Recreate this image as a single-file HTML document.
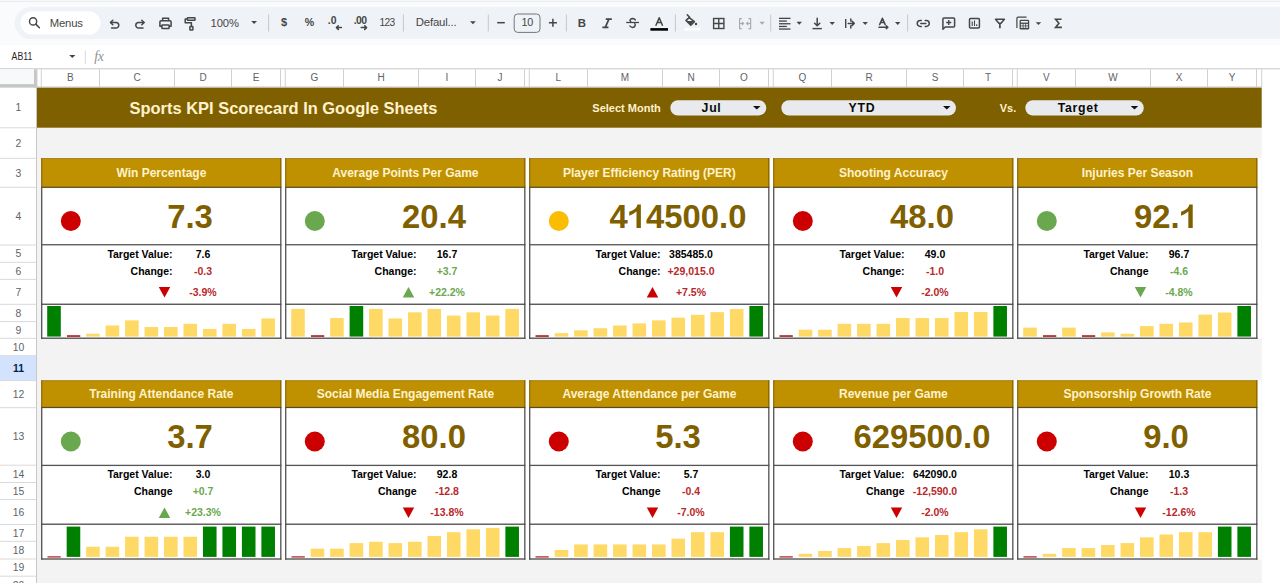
<!DOCTYPE html>
<html><head><meta charset="utf-8"><title>Sports KPI Scorecard</title>
<style>
html,body{margin:0;padding:0;width:1280px;height:583px;overflow:hidden;background:#fff;font-family:"Liberation Sans", sans-serif;}
</style></head><body>
<svg width="1280" height="583" viewBox="0 0 1280 583" style="position:absolute;left:0;top:0;font-family:&quot;Liberation Sans&quot;, sans-serif">
<rect x="0.00" y="0.00" width="1280.00" height="68.30" fill="#f9fbfd" />
<rect x="0.00" y="0.80" width="1280.00" height="1.00" fill="#e6e8eb" />
<rect x="14.6" y="7" width="1300" height="32.1" rx="16" fill="#eff2f7"/>
<rect x="20.5" y="11.5" width="80" height="23" rx="11.5" fill="#ffffff"/>
<rect x="0.00" y="45.00" width="1280.00" height="23.30" fill="#ffffff" />
<circle cx="33.1" cy="21.4" r="3.6" fill="none" stroke="#444746" stroke-width="1.4"/>
<path d="M35.8 24.1 L39.4 27.7" stroke="#444746" stroke-width="1.5" stroke-linecap="round"/>
<text x="49.7" y="26.5" font-size="11.3" fill="#444746" letter-spacing="-0.15">Menus</text>
<path d="M110.6 22.5 H116 A2.8 2.8 0 0 1 116 28.1 H111.6" fill="none" stroke="#444746" stroke-width="1.5" stroke-linecap="round" stroke-linejoin="round"/>
<path d="M112.8 20.2 L110.5 22.5 L112.8 24.8" fill="none" stroke="#444746" stroke-width="1.5" stroke-linecap="round" stroke-linejoin="round"/>
<path d="M144 22.5 H138.6 A2.8 2.8 0 0 0 138.6 28.1 H143" fill="none" stroke="#444746" stroke-width="1.5" stroke-linecap="round" stroke-linejoin="round"/>
<path d="M141.8 20.2 L144.1 22.5 L141.8 24.8" fill="none" stroke="#444746" stroke-width="1.5" stroke-linecap="round" stroke-linejoin="round"/>
<path d="M162.6 20.4 V18.3 H168.6 V20.4" fill="none" stroke="#444746" stroke-width="1.5" stroke-linecap="round" stroke-linejoin="round"/>
<path d="M161.4 26.2 H159.9 V22 Q159.9 20.8 161.1 20.8 H169.9 Q171.1 20.8 171.1 22 V26.2 H169.6" fill="none" stroke="#444746" stroke-width="1.5" stroke-linecap="round" stroke-linejoin="round"/>
<rect x="161.9" y="25" width="7.2" height="3.6" rx="0.6" fill="none" stroke="#444746" stroke-width="1.5" stroke-linecap="round" stroke-linejoin="round"/>
<rect x="187.4" y="17.7" width="7.6" height="2.6" rx="0.6" fill="none" stroke="#444746" stroke-width="1.5" stroke-linecap="round" stroke-linejoin="round"/>
<path d="M187.2 19 H185.2 V22.7 H191.4 V26.4" fill="none" stroke="#444746" stroke-width="1.5" stroke-linecap="round" stroke-linejoin="round"/>
<rect x="189.9" y="26.6" width="3" height="3.5" rx="0.5" fill="none" stroke="#444746" stroke-width="1.5" stroke-linecap="round" stroke-linejoin="round"/>
<text x="210.6" y="26.8" font-size="11.2" fill="#444746" letter-spacing="-0.1">100%</text>
<path d="M251.2 21 h5.8 l-2.9 3.1 z" fill="#444746"/>
<rect x="268.1" y="14.5" width="1" height="17" fill="#c7c7c7"/>
<rect x="402.9" y="14.5" width="1" height="17" fill="#c7c7c7"/>
<rect x="487.8" y="14.5" width="1" height="17" fill="#c7c7c7"/>
<rect x="565.9" y="14.5" width="1" height="17" fill="#c7c7c7"/>
<rect x="674.9" y="14.5" width="1" height="17" fill="#c7c7c7"/>
<rect x="770.2" y="14.5" width="1" height="17" fill="#c7c7c7"/>
<rect x="907.1" y="14.5" width="1" height="17" fill="#c7c7c7"/>
<text x="284" y="26.2" font-size="11" font-weight="bold" fill="#444746" text-anchor="middle">$</text>
<text x="309.4" y="26.2" font-size="10.6" font-weight="bold" fill="#444746" text-anchor="middle">%</text>
<text x="327.8" y="24.2" font-size="10.4" font-weight="bold" fill="#444746">.0</text>
<path d="M341.4 27.6 H336.4 M338.3 25.8 L336.4 27.6 L338.3 29.4" fill="none" stroke="#444746" stroke-width="1.5" stroke-linecap="round" stroke-linejoin="round" stroke-width="1.3"/>
<text x="353.8" y="24.2" font-size="10.4" font-weight="bold" fill="#444746" letter-spacing="-0.6">.00</text>
<path d="M361.2 27.6 H366.6 M364.7 25.8 L366.6 27.6 L364.7 29.4" fill="none" stroke="#444746" stroke-width="1.5" stroke-linecap="round" stroke-linejoin="round" stroke-width="1.3"/>
<text x="379.6" y="25.7" font-size="10.2" fill="#444746" letter-spacing="-0.75">123</text>
<text x="415.8" y="26.2" font-size="11.4" fill="#444746" letter-spacing="-0.2">Defaul...</text>
<path d="M470 21.2 h5.8 l-2.9 3.1 z" fill="#444746"/>
<path d="M497.2 22.7 H504.8" stroke="#444746" stroke-width="1.5"/>
<rect x="514.2" y="14" width="25.8" height="18.4" rx="3.5" fill="none" stroke="#747775" stroke-width="1"/>
<text x="527.3" y="26.4" font-size="10.8" fill="#444746" text-anchor="middle" letter-spacing="-0.3">10</text>
<path d="M548.9 22.8 H556.9 M552.9 18.8 V26.8" stroke="#444746" stroke-width="1.5"/>
<text x="581.8" y="26.9" font-size="11.4" font-weight="bold" fill="#444746" text-anchor="middle">B</text>
<path d="M606.6 19.2 H611 M603.2 27.4 H607.6 M608.9 19.2 L605.3 27.4" fill="none" stroke="#444746" stroke-width="1.7" stroke-linecap="square"/>
<path d="M626.2 22.5 H639" stroke="#444746" stroke-width="1.3"/>
<path d="M630.6 21.6 Q629.6 20.6 630.4 19.5 Q631.2 18.5 632.8 18.5 Q634.6 18.6 635.3 19.9" fill="none" stroke="#444746" stroke-width="1.5" stroke-linecap="round" stroke-linejoin="round" stroke-width="1.5"/>
<path d="M634.8 23.6 Q635.6 24.6 635 25.9 Q634.3 27.4 632.6 27.4 Q630.8 27.4 630 26" fill="none" stroke="#444746" stroke-width="1.5" stroke-linecap="round" stroke-linejoin="round" stroke-width="1.5"/>
<path d="M656 25.3 L659.2 17.8 L662.4 25.3 M657.2 22.6 H661.2" fill="none" stroke="#444746" stroke-width="1.5" stroke-linecap="round" stroke-linejoin="round" stroke-width="1.6" stroke-linecap="butt" stroke-linejoin="miter"/>
<rect x="650.4" y="28.1" width="17.6" height="2.6" fill="#000"/>
<path d="M687.3 14.9 L689.6 17.2" fill="none" stroke="#444746" stroke-width="1.5" stroke-linecap="round" stroke-linejoin="round" stroke-width="1.4"/>
<path d="M689.2 17.6 L694.4 21.6 L690.8 25.1 L686 20.4 Z" fill="none" stroke="#444746" stroke-width="1.5" stroke-linejoin="round"/>
<path d="M686.6 21 L694 21 L690.8 24.6 Z" fill="#444746"/>
<circle cx="696" cy="24" r="1.2" fill="#444746"/>
<rect x="684.5" y="28" width="15.5" height="2.6" fill="#ffffff"/>
<rect x="713.6" y="18.5" width="10.3" height="10" fill="none" stroke="#444746" stroke-width="1.4"/>
<path d="M718.75 18.6 V28.4 M713.8 23.5 H723.8" stroke="#444746" stroke-width="1.4"/>
<path d="M741.8 18.6 H739.6 V28.6 H741.8 M748.4 18.6 H750.6 V28.6 H748.4" fill="none" stroke="#a8abaf" stroke-width="1.2"/>
<path d="M739.6 23.5 H743.6 M742 22 L743.6 23.5 L742 25 M750.6 23.5 H746.6 M748.2 22 L746.6 23.5 L748.2 25" fill="none" stroke="#a8abaf" stroke-width="1.1"/>
<path d="M759.4 21.8 h5.4 l-2.7 2.9 z" fill="#a8abaf"/>
<rect x="779" y="17.7" width="11.5" height="1.3" fill="#444746"/>
<rect x="779" y="20.4" width="7.8" height="1.3" fill="#444746"/>
<rect x="779" y="23.099999999999998" width="11.5" height="1.3" fill="#444746"/>
<rect x="779" y="25.799999999999997" width="7.8" height="1.3" fill="#444746"/>
<rect x="779" y="28.4" width="11.5" height="1.3" fill="#444746"/>
<path d="M796.5 21.8 h5.5 l-2.75 3 z" fill="#444746"/>
<path d="M817.2 18.3 V25.6 M814.6 23.2 L817.2 25.8 L819.8 23.2" fill="none" stroke="#444746" stroke-width="1.5" stroke-linecap="round" stroke-linejoin="round" stroke-width="1.5"/>
<rect x="812.5" y="27.9" width="9.4" height="1.4" fill="#444746"/>
<path d="M829.5 22 h5.4 l-2.7 3 z" fill="#444746"/>
<rect x="845" y="19" width="1.4" height="9" fill="#444746"/>
<path d="M850.8 19 V21 M850.8 25.8 V28 M848.2 23.4 H854 M852.2 21.4 L854.2 23.4 L852.2 25.4" fill="none" stroke="#444746" stroke-width="1.5" stroke-linecap="round" stroke-linejoin="round" stroke-width="1.4"/>
<path d="M862.5 22 h5.4 l-2.7 3 z" fill="#444746"/>
<path d="M879.6 24.6 L882.4 18.3 L885.2 24.6 M880.6 22.4 H884.2" fill="none" stroke="#444746" stroke-width="1.5" stroke-linecap="round" stroke-linejoin="round" stroke-width="1.2" stroke-linecap="butt" stroke-linejoin="miter"/>
<path d="M879 27.2 H887.8 M886.3 25.8 L887.9 27.2 L886.3 28.6" fill="none" stroke="#444746" stroke-width="1.5" stroke-linecap="round" stroke-linejoin="round" stroke-width="1.2"/>
<path d="M895 22 h5.4 l-2.7 3 z" fill="#444746"/>
<path d="M921.3 20.5 H920.2 A2.95 2.95 0 0 0 920.2 26.4 H921.3 M925.2 20.5 H926.3 A2.95 2.95 0 0 1 926.3 26.4 H925.2 M920.8 23.45 H925.8" fill="none" stroke="#444746" stroke-width="1.5" stroke-linecap="round" stroke-linejoin="round" stroke-width="1.5"/>
<path d="M942.9 29.3 V18.9 Q942.9 17.9 943.9 17.9 H953.6 Q954.6 17.9 954.6 18.9 V26 Q954.6 27 953.6 27 H945.2 Z" fill="none" stroke="#444746" stroke-width="1.5" stroke-linejoin="round"/>
<path d="M948.75 19.9 V25 M946.2 22.45 H951.3" stroke="#444746" stroke-width="1.4"/>
<rect x="969.5" y="18.5" width="9.9" height="9.6" rx="1" fill="none" stroke="#444746" stroke-width="1.5"/>
<path d="M972.2 21.4 V26 M974.5 20.6 V26 M976.7 24.3 V26" stroke="#444746" stroke-width="1.1"/>
<path d="M995.5 19.3 H1004.4 L1001 23.3 L998.9 23.3 Z" fill="none" stroke="#444746" stroke-width="1.5" stroke-linejoin="round"/>
<path d="M999.9 23.2 V28.2" stroke="#444746" stroke-width="1.7"/>
<path d="M1016.9 28 V18.3 Q1016.9 17.2 1018 17.2 H1026.5" fill="none" stroke="#444746" stroke-width="1.2"/>
<rect x="1019.6" y="19.8" width="9.6" height="9.6" rx="1.2" fill="#444746"/>
<rect x="1020.9" y="21" width="7" height="1.6" fill="#eff2f7"/>
<rect x="1020.9" y="23.9" width="1.8" height="1.6" fill="#eff2f7"/>
<rect x="1023.5" y="23.9" width="1.8" height="1.6" fill="#eff2f7"/>
<rect x="1026.1" y="23.9" width="1.8" height="1.6" fill="#eff2f7"/>
<rect x="1020.9" y="26.3" width="1.8" height="1.6" fill="#eff2f7"/>
<rect x="1023.5" y="26.3" width="1.8" height="1.6" fill="#eff2f7"/>
<rect x="1026.1" y="26.3" width="1.8" height="1.6" fill="#eff2f7"/>
<path d="M1035.7 22.3 h5.5 l-2.75 2.8 z" fill="#444746"/>
<path d="M1061.6 19.3 H1055.6 L1058.9 23.3 L1055.6 27.4 H1061.9" fill="none" stroke="#444746" stroke-width="1.6" stroke-linejoin="miter"/>
<text transform="translate(11.6 60) scale(0.87 1)" font-size="10" fill="#1f1f1f">AB11</text>
<path d="M69.2 55 h6.2 l-3.1 2.9 z" fill="#444746"/>
<rect x="84.8" y="50.3" width="1" height="13.6" fill="#d7d9dc"/>
<text x="94.2" y="60.6" font-size="13.8" fill="#8e9194" font-style="italic" font-family="Liberation Serif, serif" letter-spacing="-0.3">fx</text>
<rect x="0.00" y="68.30" width="1280.00" height="514.70" fill="#ffffff" />
<rect x="37.00" y="87.50" width="1224.70" height="495.50" fill="#f3f3f3" />
<line x1="0" y1="68.8" x2="1280" y2="68.8" stroke="#c7c7c7" stroke-width="1"/>
<line x1="0" y1="87.0" x2="1261.7" y2="87.0" stroke="#c7c7c7" stroke-width="1"/>
<rect x="0.00" y="69.30" width="34.00" height="18.20" fill="#f8f9fa" />
<rect x="0.00" y="84.10" width="37.00" height="3.40" fill="#c4c7c5" />
<rect x="34.00" y="69.30" width="3.00" height="18.20" fill="#c4c7c5" />
<line x1="41.25" y1="69.3" x2="41.25" y2="87.5" stroke="#d0d0d0" stroke-width="1"/>
<line x1="99.50" y1="69.3" x2="99.50" y2="87.5" stroke="#d0d0d0" stroke-width="1"/>
<text x="70.38" y="81.20" font-size="10" fill="#5f6368" font-weight="normal" text-anchor="middle" >B</text>
<line x1="174.50" y1="69.3" x2="174.50" y2="87.5" stroke="#d0d0d0" stroke-width="1"/>
<text x="137.00" y="81.20" font-size="10" fill="#5f6368" font-weight="normal" text-anchor="middle" >C</text>
<line x1="231.50" y1="69.3" x2="231.50" y2="87.5" stroke="#d0d0d0" stroke-width="1"/>
<text x="203.00" y="81.20" font-size="10" fill="#5f6368" font-weight="normal" text-anchor="middle" >D</text>
<line x1="280.50" y1="69.3" x2="280.50" y2="87.5" stroke="#d0d0d0" stroke-width="1"/>
<text x="256.00" y="81.20" font-size="10" fill="#5f6368" font-weight="normal" text-anchor="middle" >E</text>
<line x1="285.25" y1="69.3" x2="285.25" y2="87.5" stroke="#d0d0d0" stroke-width="1"/>
<line x1="343.50" y1="69.3" x2="343.50" y2="87.5" stroke="#d0d0d0" stroke-width="1"/>
<text x="314.38" y="81.20" font-size="10" fill="#5f6368" font-weight="normal" text-anchor="middle" >G</text>
<line x1="418.50" y1="69.3" x2="418.50" y2="87.5" stroke="#d0d0d0" stroke-width="1"/>
<text x="381.00" y="81.20" font-size="10" fill="#5f6368" font-weight="normal" text-anchor="middle" >H</text>
<line x1="475.50" y1="69.3" x2="475.50" y2="87.5" stroke="#d0d0d0" stroke-width="1"/>
<text x="447.00" y="81.20" font-size="10" fill="#5f6368" font-weight="normal" text-anchor="middle" >I</text>
<line x1="524.50" y1="69.3" x2="524.50" y2="87.5" stroke="#d0d0d0" stroke-width="1"/>
<text x="500.00" y="81.20" font-size="10" fill="#5f6368" font-weight="normal" text-anchor="middle" >J</text>
<line x1="529.25" y1="69.3" x2="529.25" y2="87.5" stroke="#d0d0d0" stroke-width="1"/>
<line x1="587.50" y1="69.3" x2="587.50" y2="87.5" stroke="#d0d0d0" stroke-width="1"/>
<text x="558.38" y="81.20" font-size="10" fill="#5f6368" font-weight="normal" text-anchor="middle" >L</text>
<line x1="662.50" y1="69.3" x2="662.50" y2="87.5" stroke="#d0d0d0" stroke-width="1"/>
<text x="625.00" y="81.20" font-size="10" fill="#5f6368" font-weight="normal" text-anchor="middle" >M</text>
<line x1="719.50" y1="69.3" x2="719.50" y2="87.5" stroke="#d0d0d0" stroke-width="1"/>
<text x="691.00" y="81.20" font-size="10" fill="#5f6368" font-weight="normal" text-anchor="middle" >N</text>
<line x1="768.50" y1="69.3" x2="768.50" y2="87.5" stroke="#d0d0d0" stroke-width="1"/>
<text x="744.00" y="81.20" font-size="10" fill="#5f6368" font-weight="normal" text-anchor="middle" >O</text>
<line x1="773.25" y1="69.3" x2="773.25" y2="87.5" stroke="#d0d0d0" stroke-width="1"/>
<line x1="831.50" y1="69.3" x2="831.50" y2="87.5" stroke="#d0d0d0" stroke-width="1"/>
<text x="802.38" y="81.20" font-size="10" fill="#5f6368" font-weight="normal" text-anchor="middle" >Q</text>
<line x1="906.50" y1="69.3" x2="906.50" y2="87.5" stroke="#d0d0d0" stroke-width="1"/>
<text x="869.00" y="81.20" font-size="10" fill="#5f6368" font-weight="normal" text-anchor="middle" >R</text>
<line x1="963.50" y1="69.3" x2="963.50" y2="87.5" stroke="#d0d0d0" stroke-width="1"/>
<text x="935.00" y="81.20" font-size="10" fill="#5f6368" font-weight="normal" text-anchor="middle" >S</text>
<line x1="1012.50" y1="69.3" x2="1012.50" y2="87.5" stroke="#d0d0d0" stroke-width="1"/>
<text x="988.00" y="81.20" font-size="10" fill="#5f6368" font-weight="normal" text-anchor="middle" >T</text>
<line x1="1017.25" y1="69.3" x2="1017.25" y2="87.5" stroke="#d0d0d0" stroke-width="1"/>
<line x1="1075.50" y1="69.3" x2="1075.50" y2="87.5" stroke="#d0d0d0" stroke-width="1"/>
<text x="1046.38" y="81.20" font-size="10" fill="#5f6368" font-weight="normal" text-anchor="middle" >V</text>
<line x1="1150.50" y1="69.3" x2="1150.50" y2="87.5" stroke="#d0d0d0" stroke-width="1"/>
<text x="1113.00" y="81.20" font-size="10" fill="#5f6368" font-weight="normal" text-anchor="middle" >W</text>
<line x1="1207.50" y1="69.3" x2="1207.50" y2="87.5" stroke="#d0d0d0" stroke-width="1"/>
<text x="1179.00" y="81.20" font-size="10" fill="#5f6368" font-weight="normal" text-anchor="middle" >X</text>
<line x1="1256.50" y1="69.3" x2="1256.50" y2="87.5" stroke="#d0d0d0" stroke-width="1"/>
<text x="1232.00" y="81.20" font-size="10" fill="#5f6368" font-weight="normal" text-anchor="middle" >Y</text>
<line x1="1261.70" y1="69.3" x2="1261.70" y2="87.5" stroke="#d0d0d0" stroke-width="1"/>
<line x1="37.0" y1="69.3" x2="37.0" y2="87.5" stroke="#d0d0d0" stroke-width="1"/>
<text x="18.50" y="111.35" font-size="10.4" fill="#5f6368" font-weight="normal" text-anchor="middle" >1</text>
<line x1="0" y1="127.80" x2="36" y2="127.80" stroke="#d9d9d9" stroke-width="1"/>
<text x="18.50" y="146.75" font-size="10.4" fill="#5f6368" font-weight="normal" text-anchor="middle" >2</text>
<line x1="0" y1="158.30" x2="36" y2="158.30" stroke="#d9d9d9" stroke-width="1"/>
<text x="18.50" y="176.50" font-size="10.4" fill="#5f6368" font-weight="normal" text-anchor="middle" >3</text>
<line x1="0" y1="187.30" x2="36" y2="187.30" stroke="#d9d9d9" stroke-width="1"/>
<text x="18.50" y="219.85" font-size="10.4" fill="#5f6368" font-weight="normal" text-anchor="middle" >4</text>
<line x1="0" y1="245.00" x2="36" y2="245.00" stroke="#d9d9d9" stroke-width="1"/>
<text x="18.50" y="257.35" font-size="10.4" fill="#5f6368" font-weight="normal" text-anchor="middle" >5</text>
<line x1="0" y1="262.30" x2="36" y2="262.30" stroke="#d9d9d9" stroke-width="1"/>
<text x="18.50" y="274.55" font-size="10.4" fill="#5f6368" font-weight="normal" text-anchor="middle" >6</text>
<line x1="0" y1="279.40" x2="36" y2="279.40" stroke="#d9d9d9" stroke-width="1"/>
<text x="18.50" y="295.55" font-size="10.4" fill="#5f6368" font-weight="normal" text-anchor="middle" >7</text>
<line x1="0" y1="304.30" x2="36" y2="304.30" stroke="#d9d9d9" stroke-width="1"/>
<text x="18.50" y="316.65" font-size="10.4" fill="#5f6368" font-weight="normal" text-anchor="middle" >8</text>
<line x1="0" y1="321.60" x2="36" y2="321.60" stroke="#d9d9d9" stroke-width="1"/>
<text x="18.50" y="333.65" font-size="10.4" fill="#5f6368" font-weight="normal" text-anchor="middle" >9</text>
<line x1="0" y1="338.30" x2="36" y2="338.30" stroke="#d9d9d9" stroke-width="1"/>
<text x="18.50" y="350.70" font-size="10.4" fill="#5f6368" font-weight="normal" text-anchor="middle" >10</text>
<line x1="0" y1="355.70" x2="36" y2="355.70" stroke="#d9d9d9" stroke-width="1"/>
<rect x="0.00" y="355.70" width="36.00" height="24.90" fill="#d3e3fd" />
<text x="18.50" y="371.85" font-size="10.4" fill="#041e49" font-weight="bold" text-anchor="middle" >11</text>
<line x1="0" y1="380.60" x2="36" y2="380.60" stroke="#d9d9d9" stroke-width="1"/>
<text x="18.50" y="397.85" font-size="10.4" fill="#5f6368" font-weight="normal" text-anchor="middle" >12</text>
<line x1="0" y1="407.70" x2="36" y2="407.70" stroke="#d9d9d9" stroke-width="1"/>
<text x="18.50" y="440.15" font-size="10.4" fill="#5f6368" font-weight="normal" text-anchor="middle" >13</text>
<line x1="0" y1="465.20" x2="36" y2="465.20" stroke="#d9d9d9" stroke-width="1"/>
<text x="18.50" y="477.55" font-size="10.4" fill="#5f6368" font-weight="normal" text-anchor="middle" >14</text>
<line x1="0" y1="482.50" x2="36" y2="482.50" stroke="#d9d9d9" stroke-width="1"/>
<text x="18.50" y="494.75" font-size="10.4" fill="#5f6368" font-weight="normal" text-anchor="middle" >15</text>
<line x1="0" y1="499.60" x2="36" y2="499.60" stroke="#d9d9d9" stroke-width="1"/>
<text x="18.50" y="515.75" font-size="10.4" fill="#5f6368" font-weight="normal" text-anchor="middle" >16</text>
<line x1="0" y1="524.50" x2="36" y2="524.50" stroke="#d9d9d9" stroke-width="1"/>
<text x="18.50" y="536.60" font-size="10.4" fill="#5f6368" font-weight="normal" text-anchor="middle" >17</text>
<line x1="0" y1="541.30" x2="36" y2="541.30" stroke="#d9d9d9" stroke-width="1"/>
<text x="18.50" y="553.85" font-size="10.4" fill="#5f6368" font-weight="normal" text-anchor="middle" >18</text>
<line x1="0" y1="559.00" x2="36" y2="559.00" stroke="#d9d9d9" stroke-width="1"/>
<text x="18.50" y="571.30" font-size="10.4" fill="#5f6368" font-weight="normal" text-anchor="middle" >19</text>
<line x1="0" y1="576.20" x2="36" y2="576.20" stroke="#d9d9d9" stroke-width="1"/>
<text x="18.50" y="588.50" font-size="10.4" fill="#5f6368" font-weight="normal" text-anchor="middle" >20</text>
<line x1="0" y1="593.40" x2="36" y2="593.40" stroke="#d9d9d9" stroke-width="1"/>
<line x1="36.5" y1="87.5" x2="36.5" y2="583" stroke="#c7c7c7" stroke-width="1"/>
<rect x="37.00" y="87.70" width="1224.70" height="40.00" fill="#7f6000" />
<text x="283.50" y="114.00" font-size="16.45" fill="#fff2cc" font-weight="bold" text-anchor="middle" >Sports KPI Scorecard In Google Sheets</text>
<text x="626.60" y="111.80" font-size="11" fill="#fff2cc" font-weight="bold" text-anchor="middle" >Select Month</text>
<text x="1008.00" y="111.80" font-size="11" fill="#fff2cc" font-weight="bold" text-anchor="middle" >Vs.</text>
<rect x="670.3" y="100.2" width="96.0" height="15.2" rx="7.6" fill="#e8eaed"/>
<text x="711.55" y="111.90" font-size="12.3" fill="#0a0a0a" font-weight="bold" text-anchor="middle" letter-spacing="0.7">Jul</text>
<path d="M753 106 h7.5 l-3.75 3.6 z" fill="#111"/>
<rect x="781.3" y="100.2" width="174.70000000000005" height="15.2" rx="7.6" fill="#e8eaed"/>
<text x="861.95" y="111.90" font-size="12.3" fill="#0a0a0a" font-weight="bold" text-anchor="middle" letter-spacing="0.7">YTD</text>
<path d="M943 106 h7.5 l-3.75 3.6 z" fill="#111"/>
<rect x="1025.3" y="100.2" width="118.5" height="15.2" rx="7.6" fill="#e8eaed"/>
<text x="1078.15" y="111.90" font-size="12.3" fill="#0a0a0a" font-weight="bold" text-anchor="middle" letter-spacing="0.7">Target</text>
<path d="M1130.7 106 h7.5 l-3.75 3.6 z" fill="#111"/>
<rect x="41.10" y="187.30" width="239.75" height="150.90" fill="#ffffff" />
<rect x="280.85" y="158.20" width="4.40" height="180.60" fill="#ffffff" />
<rect x="41.10" y="158.20" width="240.35" height="29.10" fill="#bf9000" />
<rect x="41.10" y="158.20" width="240.35" height="0.80" fill="rgba(90,60,0,0.35)" />
<rect x="41.10" y="158.20" width="1.20" height="29.10" fill="rgba(60,40,0,0.35)" />
<rect x="280.20" y="158.20" width="1.20" height="29.10" fill="rgba(60,40,0,0.45)" />
<rect x="41.10" y="186.70" width="240.35" height="1.20" fill="#5a4a20" />
<rect x="41.10" y="187.30" width="1.25" height="151.50" fill="#4a4a4a" />
<rect x="280.20" y="187.30" width="1.25" height="151.50" fill="#4a4a4a" />
<rect x="41.10" y="244.10" width="240.35" height="1.30" fill="#555555" />
<rect x="41.10" y="303.60" width="240.35" height="1.30" fill="#4a4a4a" />
<rect x="41.10" y="337.55" width="240.35" height="1.30" fill="#4a4a4a" />
<text x="161.40" y="177.40" font-size="12" fill="#fff2cc" font-weight="bold" text-anchor="middle" >Win Percentage</text>
<circle cx="70.80" cy="221.00" r="10" fill="#cc0000"/>
<text x="167.20" y="228.10" font-size="32.8" fill="#7f6000" font-weight="bold">7.3</text>
<text x="172.55" y="257.60" font-size="10.5" fill="#000" font-weight="bold" text-anchor="end" >Target Value:</text>
<text x="203.00" y="257.60" font-size="10.5" fill="#000" font-weight="bold" text-anchor="middle" >7.6</text>
<text x="172.55" y="274.50" font-size="10.5" fill="#000" font-weight="bold" text-anchor="end" >Change:</text>
<text x="203.00" y="274.50" font-size="10.5" fill="#b8282a" font-weight="bold" text-anchor="middle" >-0.3</text>
<path d="M158.75 286.90 h11.5 l-5.75 10.5 z" fill="#cc0000"/>
<text x="203.00" y="295.90" font-size="10.5" fill="#b8282a" font-weight="bold" text-anchor="middle" >-3.9%</text>
<rect x="47.20" y="306.00" width="13.60" height="30.60" fill="#008000" />
<rect x="66.97" y="335.10" width="13.30" height="1.90" fill="#b83a3a" />
<rect x="86.14" y="333.73" width="13.60" height="2.87" fill="#ffd966" />
<rect x="105.61" y="325.51" width="13.60" height="11.09" fill="#ffd966" />
<rect x="125.08" y="320.34" width="13.60" height="16.26" fill="#ffd966" />
<rect x="144.55" y="327.04" width="13.60" height="9.56" fill="#ffd966" />
<rect x="164.02" y="327.04" width="13.60" height="9.56" fill="#ffd966" />
<rect x="183.49" y="323.79" width="13.60" height="12.81" fill="#ffd966" />
<rect x="202.96" y="328.95" width="13.60" height="7.65" fill="#ffd966" />
<rect x="222.43" y="323.79" width="13.60" height="12.81" fill="#ffd966" />
<rect x="241.90" y="328.95" width="13.60" height="7.65" fill="#ffd966" />
<rect x="261.37" y="318.43" width="13.60" height="18.17" fill="#ffd966" />
<rect x="285.10" y="187.30" width="239.75" height="150.90" fill="#ffffff" />
<rect x="524.85" y="158.20" width="4.40" height="180.60" fill="#ffffff" />
<rect x="285.10" y="158.20" width="240.35" height="29.10" fill="#bf9000" />
<rect x="285.10" y="158.20" width="240.35" height="0.80" fill="rgba(90,60,0,0.35)" />
<rect x="285.10" y="158.20" width="1.20" height="29.10" fill="rgba(60,40,0,0.35)" />
<rect x="524.20" y="158.20" width="1.20" height="29.10" fill="rgba(60,40,0,0.45)" />
<rect x="285.10" y="186.70" width="240.35" height="1.20" fill="#5a4a20" />
<rect x="285.10" y="187.30" width="1.25" height="151.50" fill="#4a4a4a" />
<rect x="524.20" y="187.30" width="1.25" height="151.50" fill="#4a4a4a" />
<rect x="285.10" y="244.10" width="240.35" height="1.30" fill="#555555" />
<rect x="285.10" y="303.60" width="240.35" height="1.30" fill="#4a4a4a" />
<rect x="285.10" y="337.55" width="240.35" height="1.30" fill="#4a4a4a" />
<text x="405.40" y="177.40" font-size="12" fill="#fff2cc" font-weight="bold" text-anchor="middle" >Average Points Per Game</text>
<circle cx="314.80" cy="221.00" r="10" fill="#6aa84f"/>
<text x="402.08" y="228.10" font-size="32.8" fill="#7f6000" font-weight="bold">20.4</text>
<text x="416.55" y="257.60" font-size="10.5" fill="#000" font-weight="bold" text-anchor="end" >Target Value:</text>
<text x="447.00" y="257.60" font-size="10.5" fill="#000" font-weight="bold" text-anchor="middle" >16.7</text>
<text x="416.55" y="274.50" font-size="10.5" fill="#000" font-weight="bold" text-anchor="end" >Change:</text>
<text x="447.00" y="274.50" font-size="10.5" fill="#6aa84f" font-weight="bold" text-anchor="middle" >+3.7</text>
<path d="M402.75 297.40 h11.5 l-5.75 -10.5 z" fill="#6aa84f"/>
<text x="447.00" y="295.90" font-size="10.5" fill="#6aa84f" font-weight="bold" text-anchor="middle" >+22.2%</text>
<rect x="291.20" y="308.87" width="13.60" height="27.73" fill="#ffd966" />
<rect x="310.97" y="335.10" width="13.30" height="1.90" fill="#b83a3a" />
<rect x="330.14" y="318.05" width="13.60" height="18.55" fill="#ffd966" />
<rect x="349.61" y="306.00" width="13.60" height="30.60" fill="#008000" />
<rect x="369.08" y="308.87" width="13.60" height="27.73" fill="#ffd966" />
<rect x="388.55" y="318.43" width="13.60" height="18.17" fill="#ffd966" />
<rect x="408.02" y="312.31" width="13.60" height="24.29" fill="#ffd966" />
<rect x="427.49" y="308.87" width="13.60" height="27.73" fill="#ffd966" />
<rect x="446.96" y="315.56" width="13.60" height="21.04" fill="#ffd966" />
<rect x="466.43" y="312.31" width="13.60" height="24.29" fill="#ffd966" />
<rect x="485.90" y="315.56" width="13.60" height="21.04" fill="#ffd966" />
<rect x="505.37" y="308.87" width="13.60" height="27.73" fill="#ffd966" />
<rect x="529.10" y="187.30" width="239.75" height="150.90" fill="#ffffff" />
<rect x="768.85" y="158.20" width="4.40" height="180.60" fill="#ffffff" />
<rect x="529.10" y="158.20" width="240.35" height="29.10" fill="#bf9000" />
<rect x="529.10" y="158.20" width="240.35" height="0.80" fill="rgba(90,60,0,0.35)" />
<rect x="529.10" y="158.20" width="1.20" height="29.10" fill="rgba(60,40,0,0.35)" />
<rect x="768.20" y="158.20" width="1.20" height="29.10" fill="rgba(60,40,0,0.45)" />
<rect x="529.10" y="186.70" width="240.35" height="1.20" fill="#5a4a20" />
<rect x="529.10" y="187.30" width="1.25" height="151.50" fill="#4a4a4a" />
<rect x="768.20" y="187.30" width="1.25" height="151.50" fill="#4a4a4a" />
<rect x="529.10" y="244.10" width="240.35" height="1.30" fill="#555555" />
<rect x="529.10" y="303.60" width="240.35" height="1.30" fill="#4a4a4a" />
<rect x="529.10" y="337.55" width="240.35" height="1.30" fill="#4a4a4a" />
<text x="649.40" y="177.40" font-size="12" fill="#fff2cc" font-weight="bold" text-anchor="middle" >Player Efficiency Rating (PER)</text>
<circle cx="558.80" cy="221.00" r="10" fill="#fbbc04"/>
<text x="609.60" y="228.10" font-size="32.8" fill="#7f6000" font-weight="bold">4</text>
<path d="M640.89 228.10 L636.50 228.10 L636.50 211.57 Q634.09 213.83 629.23 215.69 L629.23 211.72 Q632.36 210.69 635.09 208.67 Q636.97 206.96 637.53 204.62 L640.89 204.62 Z" fill="#7f6000"/>
<text x="646.08" y="228.10" font-size="32.8" fill="#7f6000" font-weight="bold">4500.0</text>
<text x="660.55" y="257.60" font-size="10.5" fill="#000" font-weight="bold" text-anchor="end" >Target Value:</text>
<text x="691.00" y="257.60" font-size="10.5" fill="#000" font-weight="bold" text-anchor="middle" >385485.0</text>
<text x="660.55" y="274.50" font-size="10.5" fill="#000" font-weight="bold" text-anchor="end" >Change:</text>
<text x="691.00" y="274.50" font-size="10.5" fill="#b8282a" font-weight="bold" text-anchor="middle" >+29,015.0</text>
<path d="M646.75 297.40 h11.5 l-5.75 -10.5 z" fill="#cc0000"/>
<text x="691.00" y="295.90" font-size="10.5" fill="#b8282a" font-weight="bold" text-anchor="middle" >+7.5%</text>
<rect x="535.50" y="335.10" width="13.30" height="1.90" fill="#b83a3a" />
<rect x="554.67" y="333.16" width="13.60" height="3.44" fill="#ffd966" />
<rect x="574.14" y="330.29" width="13.60" height="6.31" fill="#ffd966" />
<rect x="593.61" y="328.19" width="13.60" height="8.42" fill="#ffd966" />
<rect x="613.08" y="325.51" width="13.60" height="11.09" fill="#ffd966" />
<rect x="632.55" y="323.40" width="13.60" height="13.20" fill="#ffd966" />
<rect x="652.02" y="320.34" width="13.60" height="16.26" fill="#ffd966" />
<rect x="671.49" y="317.67" width="13.60" height="18.93" fill="#ffd966" />
<rect x="690.96" y="314.80" width="13.60" height="21.80" fill="#ffd966" />
<rect x="710.43" y="312.12" width="13.60" height="24.48" fill="#ffd966" />
<rect x="729.90" y="309.06" width="13.60" height="27.54" fill="#ffd966" />
<rect x="749.37" y="306.00" width="13.60" height="30.60" fill="#008000" />
<rect x="773.10" y="187.30" width="239.75" height="150.90" fill="#ffffff" />
<rect x="1012.85" y="158.20" width="4.40" height="180.60" fill="#ffffff" />
<rect x="773.10" y="158.20" width="240.35" height="29.10" fill="#bf9000" />
<rect x="773.10" y="158.20" width="240.35" height="0.80" fill="rgba(90,60,0,0.35)" />
<rect x="773.10" y="158.20" width="1.20" height="29.10" fill="rgba(60,40,0,0.35)" />
<rect x="1012.20" y="158.20" width="1.20" height="29.10" fill="rgba(60,40,0,0.45)" />
<rect x="773.10" y="186.70" width="240.35" height="1.20" fill="#5a4a20" />
<rect x="773.10" y="187.30" width="1.25" height="151.50" fill="#4a4a4a" />
<rect x="1012.20" y="187.30" width="1.25" height="151.50" fill="#4a4a4a" />
<rect x="773.10" y="244.10" width="240.35" height="1.30" fill="#555555" />
<rect x="773.10" y="303.60" width="240.35" height="1.30" fill="#4a4a4a" />
<rect x="773.10" y="337.55" width="240.35" height="1.30" fill="#4a4a4a" />
<text x="893.40" y="177.40" font-size="12" fill="#fff2cc" font-weight="bold" text-anchor="middle" >Shooting Accuracy</text>
<circle cx="802.80" cy="221.00" r="10" fill="#cc0000"/>
<text x="890.08" y="228.10" font-size="32.8" fill="#7f6000" font-weight="bold">48.0</text>
<text x="904.55" y="257.60" font-size="10.5" fill="#000" font-weight="bold" text-anchor="end" >Target Value:</text>
<text x="935.00" y="257.60" font-size="10.5" fill="#000" font-weight="bold" text-anchor="middle" >49.0</text>
<text x="904.55" y="274.50" font-size="10.5" fill="#000" font-weight="bold" text-anchor="end" >Change:</text>
<text x="935.00" y="274.50" font-size="10.5" fill="#b8282a" font-weight="bold" text-anchor="middle" >-1.0</text>
<path d="M890.75 286.90 h11.5 l-5.75 10.5 z" fill="#cc0000"/>
<text x="935.00" y="295.90" font-size="10.5" fill="#b8282a" font-weight="bold" text-anchor="middle" >-2.0%</text>
<rect x="779.50" y="335.10" width="13.30" height="1.90" fill="#b83a3a" />
<rect x="798.67" y="329.72" width="13.60" height="6.89" fill="#ffd966" />
<rect x="818.14" y="329.72" width="13.60" height="6.89" fill="#ffd966" />
<rect x="837.61" y="323.79" width="13.60" height="12.81" fill="#ffd966" />
<rect x="857.08" y="323.79" width="13.60" height="12.81" fill="#ffd966" />
<rect x="876.55" y="323.79" width="13.60" height="12.81" fill="#ffd966" />
<rect x="896.02" y="318.05" width="13.60" height="18.55" fill="#ffd966" />
<rect x="915.49" y="318.05" width="13.60" height="18.55" fill="#ffd966" />
<rect x="934.96" y="318.05" width="13.60" height="18.55" fill="#ffd966" />
<rect x="954.43" y="311.93" width="13.60" height="24.67" fill="#ffd966" />
<rect x="973.90" y="311.93" width="13.60" height="24.67" fill="#ffd966" />
<rect x="993.37" y="306.00" width="13.60" height="30.60" fill="#008000" />
<rect x="1017.10" y="187.30" width="239.75" height="150.90" fill="#ffffff" />
<rect x="1256.85" y="158.20" width="4.40" height="180.60" fill="#ffffff" />
<rect x="1017.10" y="158.20" width="240.35" height="29.10" fill="#bf9000" />
<rect x="1017.10" y="158.20" width="240.35" height="0.80" fill="rgba(90,60,0,0.35)" />
<rect x="1017.10" y="158.20" width="1.20" height="29.10" fill="rgba(60,40,0,0.35)" />
<rect x="1256.20" y="158.20" width="1.20" height="29.10" fill="rgba(60,40,0,0.45)" />
<rect x="1017.10" y="186.70" width="240.35" height="1.20" fill="#5a4a20" />
<rect x="1017.10" y="187.30" width="1.25" height="151.50" fill="#4a4a4a" />
<rect x="1256.20" y="187.30" width="1.25" height="151.50" fill="#4a4a4a" />
<rect x="1017.10" y="244.10" width="240.35" height="1.30" fill="#555555" />
<rect x="1017.10" y="303.60" width="240.35" height="1.30" fill="#4a4a4a" />
<rect x="1017.10" y="337.55" width="240.35" height="1.30" fill="#4a4a4a" />
<text x="1137.40" y="177.40" font-size="12" fill="#fff2cc" font-weight="bold" text-anchor="middle" >Injuries Per Season</text>
<circle cx="1046.80" cy="221.00" r="10" fill="#6aa84f"/>
<text x="1134.08" y="228.10" font-size="32.8" fill="#7f6000" font-weight="bold">92.</text>
<path d="M1192.73 228.10 L1188.34 228.10 L1188.34 211.57 Q1185.92 213.83 1181.07 215.69 L1181.07 211.72 Q1184.19 210.69 1186.93 208.67 Q1188.81 206.96 1189.37 204.62 L1192.73 204.62 Z" fill="#7f6000"/>
<text x="1148.55" y="257.60" font-size="10.5" fill="#000" font-weight="bold" text-anchor="end" >Target Value:</text>
<text x="1179.00" y="257.60" font-size="10.5" fill="#000" font-weight="bold" text-anchor="middle" >96.7</text>
<text x="1148.55" y="274.50" font-size="10.5" fill="#000" font-weight="bold" text-anchor="end" >Change</text>
<text x="1179.00" y="274.50" font-size="10.5" fill="#6aa84f" font-weight="bold" text-anchor="middle" >-4.6</text>
<path d="M1134.75 286.90 h11.5 l-5.75 10.5 z" fill="#6aa84f"/>
<text x="1179.00" y="295.90" font-size="10.5" fill="#6aa84f" font-weight="bold" text-anchor="middle" >-4.8%</text>
<rect x="1023.20" y="327.61" width="13.60" height="8.99" fill="#ffd966" />
<rect x="1042.97" y="335.10" width="13.30" height="1.90" fill="#b83a3a" />
<rect x="1062.14" y="327.61" width="13.60" height="8.99" fill="#ffd966" />
<rect x="1081.91" y="335.10" width="13.30" height="1.90" fill="#b83a3a" />
<rect x="1101.08" y="332.39" width="13.60" height="4.21" fill="#ffd966" />
<rect x="1120.55" y="333.73" width="13.60" height="2.87" fill="#ffd966" />
<rect x="1140.02" y="326.08" width="13.60" height="10.52" fill="#ffd966" />
<rect x="1159.49" y="323.79" width="13.60" height="12.81" fill="#ffd966" />
<rect x="1178.96" y="322.45" width="13.60" height="14.15" fill="#ffd966" />
<rect x="1198.43" y="314.61" width="13.60" height="21.99" fill="#ffd966" />
<rect x="1217.90" y="312.50" width="13.60" height="24.10" fill="#ffd966" />
<rect x="1237.37" y="306.00" width="13.60" height="30.60" fill="#008000" />
<rect x="41.10" y="407.50" width="239.75" height="151.50" fill="#ffffff" />
<rect x="280.85" y="380.30" width="4.40" height="179.30" fill="#ffffff" />
<rect x="41.10" y="380.30" width="240.35" height="27.20" fill="#bf9000" />
<rect x="41.10" y="380.30" width="240.35" height="0.80" fill="rgba(90,60,0,0.35)" />
<rect x="41.10" y="380.30" width="1.20" height="27.20" fill="rgba(60,40,0,0.35)" />
<rect x="280.20" y="380.30" width="1.20" height="27.20" fill="rgba(60,40,0,0.45)" />
<rect x="41.10" y="406.90" width="240.35" height="1.20" fill="#5a4a20" />
<rect x="41.10" y="407.50" width="1.25" height="152.10" fill="#4a4a4a" />
<rect x="280.20" y="407.50" width="1.25" height="152.10" fill="#4a4a4a" />
<rect x="41.10" y="464.75" width="240.35" height="1.30" fill="#555555" />
<rect x="41.10" y="523.55" width="240.35" height="1.30" fill="#4a4a4a" />
<rect x="41.10" y="558.35" width="240.35" height="1.30" fill="#4a4a4a" />
<text x="161.40" y="398.40" font-size="12" fill="#fff2cc" font-weight="bold" text-anchor="middle" >Training Attendance Rate</text>
<circle cx="70.80" cy="441.50" r="10" fill="#6aa84f"/>
<text x="167.20" y="448.10" font-size="32.8" fill="#7f6000" font-weight="bold">3.7</text>
<text x="172.55" y="478.10" font-size="10.5" fill="#000" font-weight="bold" text-anchor="end" >Target Value:</text>
<text x="203.00" y="478.10" font-size="10.5" fill="#000" font-weight="bold" text-anchor="middle" >3.0</text>
<text x="172.55" y="495.00" font-size="10.5" fill="#000" font-weight="bold" text-anchor="end" >Change</text>
<text x="203.00" y="495.00" font-size="10.5" fill="#6aa84f" font-weight="bold" text-anchor="middle" >+0.7</text>
<path d="M158.75 517.90 h11.5 l-5.75 -10.5 z" fill="#6aa84f"/>
<text x="203.00" y="516.40" font-size="10.5" fill="#6aa84f" font-weight="bold" text-anchor="middle" >+23.3%</text>
<rect x="47.50" y="556.20" width="13.30" height="1.40" fill="#b83a3a" />
<rect x="66.67" y="526.60" width="13.60" height="30.30" fill="#008000" />
<rect x="86.14" y="546.74" width="13.60" height="10.16" fill="#ffd966" />
<rect x="105.61" y="546.74" width="13.60" height="10.16" fill="#ffd966" />
<rect x="125.08" y="536.76" width="13.60" height="20.14" fill="#ffd966" />
<rect x="144.55" y="536.76" width="13.60" height="20.14" fill="#ffd966" />
<rect x="164.02" y="536.76" width="13.60" height="20.14" fill="#ffd966" />
<rect x="183.49" y="536.76" width="13.60" height="20.14" fill="#ffd966" />
<rect x="202.96" y="526.60" width="13.60" height="30.30" fill="#008000" />
<rect x="222.43" y="526.60" width="13.60" height="30.30" fill="#008000" />
<rect x="241.90" y="526.60" width="13.60" height="30.30" fill="#008000" />
<rect x="261.37" y="526.60" width="13.60" height="30.30" fill="#008000" />
<rect x="285.10" y="407.50" width="239.75" height="151.50" fill="#ffffff" />
<rect x="524.85" y="380.30" width="4.40" height="179.30" fill="#ffffff" />
<rect x="285.10" y="380.30" width="240.35" height="27.20" fill="#bf9000" />
<rect x="285.10" y="380.30" width="240.35" height="0.80" fill="rgba(90,60,0,0.35)" />
<rect x="285.10" y="380.30" width="1.20" height="27.20" fill="rgba(60,40,0,0.35)" />
<rect x="524.20" y="380.30" width="1.20" height="27.20" fill="rgba(60,40,0,0.45)" />
<rect x="285.10" y="406.90" width="240.35" height="1.20" fill="#5a4a20" />
<rect x="285.10" y="407.50" width="1.25" height="152.10" fill="#4a4a4a" />
<rect x="524.20" y="407.50" width="1.25" height="152.10" fill="#4a4a4a" />
<rect x="285.10" y="464.75" width="240.35" height="1.30" fill="#555555" />
<rect x="285.10" y="523.55" width="240.35" height="1.30" fill="#4a4a4a" />
<rect x="285.10" y="558.35" width="240.35" height="1.30" fill="#4a4a4a" />
<text x="405.40" y="398.40" font-size="12" fill="#fff2cc" font-weight="bold" text-anchor="middle" >Social Media Engagement Rate</text>
<circle cx="314.80" cy="441.50" r="10" fill="#cc0000"/>
<text x="402.08" y="448.10" font-size="32.8" fill="#7f6000" font-weight="bold">80.0</text>
<text x="416.55" y="478.10" font-size="10.5" fill="#000" font-weight="bold" text-anchor="end" >Target Value:</text>
<text x="447.00" y="478.10" font-size="10.5" fill="#000" font-weight="bold" text-anchor="middle" >92.8</text>
<text x="416.55" y="495.00" font-size="10.5" fill="#000" font-weight="bold" text-anchor="end" >Change</text>
<text x="447.00" y="495.00" font-size="10.5" fill="#b8282a" font-weight="bold" text-anchor="middle" >-12.8</text>
<path d="M402.75 507.40 h11.5 l-5.75 10.5 z" fill="#cc0000"/>
<text x="447.00" y="516.40" font-size="10.5" fill="#b8282a" font-weight="bold" text-anchor="middle" >-13.8%</text>
<rect x="291.50" y="556.20" width="13.30" height="1.40" fill="#b83a3a" />
<rect x="310.67" y="548.65" width="13.60" height="8.25" fill="#ffd966" />
<rect x="330.14" y="548.65" width="13.60" height="8.25" fill="#ffd966" />
<rect x="349.61" y="543.09" width="13.60" height="13.81" fill="#ffd966" />
<rect x="369.08" y="541.75" width="13.60" height="15.15" fill="#ffd966" />
<rect x="388.55" y="543.09" width="13.60" height="13.81" fill="#ffd966" />
<rect x="408.02" y="541.75" width="13.60" height="15.15" fill="#ffd966" />
<rect x="427.49" y="536.00" width="13.60" height="20.90" fill="#ffd966" />
<rect x="446.96" y="532.16" width="13.60" height="24.74" fill="#ffd966" />
<rect x="466.43" y="529.28" width="13.60" height="27.62" fill="#ffd966" />
<rect x="485.90" y="527.94" width="13.60" height="28.96" fill="#ffd966" />
<rect x="505.37" y="526.60" width="13.60" height="30.30" fill="#008000" />
<rect x="529.10" y="407.50" width="239.75" height="151.50" fill="#ffffff" />
<rect x="768.85" y="380.30" width="4.40" height="179.30" fill="#ffffff" />
<rect x="529.10" y="380.30" width="240.35" height="27.20" fill="#bf9000" />
<rect x="529.10" y="380.30" width="240.35" height="0.80" fill="rgba(90,60,0,0.35)" />
<rect x="529.10" y="380.30" width="1.20" height="27.20" fill="rgba(60,40,0,0.35)" />
<rect x="768.20" y="380.30" width="1.20" height="27.20" fill="rgba(60,40,0,0.45)" />
<rect x="529.10" y="406.90" width="240.35" height="1.20" fill="#5a4a20" />
<rect x="529.10" y="407.50" width="1.25" height="152.10" fill="#4a4a4a" />
<rect x="768.20" y="407.50" width="1.25" height="152.10" fill="#4a4a4a" />
<rect x="529.10" y="464.75" width="240.35" height="1.30" fill="#555555" />
<rect x="529.10" y="523.55" width="240.35" height="1.30" fill="#4a4a4a" />
<rect x="529.10" y="558.35" width="240.35" height="1.30" fill="#4a4a4a" />
<text x="649.40" y="398.40" font-size="12" fill="#fff2cc" font-weight="bold" text-anchor="middle" >Average Attendance per Game</text>
<circle cx="558.80" cy="441.50" r="10" fill="#cc0000"/>
<text x="655.20" y="448.10" font-size="32.8" fill="#7f6000" font-weight="bold">5.3</text>
<text x="660.55" y="478.10" font-size="10.5" fill="#000" font-weight="bold" text-anchor="end" >Target Value:</text>
<text x="691.00" y="478.10" font-size="10.5" fill="#000" font-weight="bold" text-anchor="middle" >5.7</text>
<text x="660.55" y="495.00" font-size="10.5" fill="#000" font-weight="bold" text-anchor="end" >Change</text>
<text x="691.00" y="495.00" font-size="10.5" fill="#b8282a" font-weight="bold" text-anchor="middle" >-0.4</text>
<path d="M646.75 507.40 h11.5 l-5.75 10.5 z" fill="#cc0000"/>
<text x="691.00" y="516.40" font-size="10.5" fill="#b8282a" font-weight="bold" text-anchor="middle" >-7.0%</text>
<rect x="535.50" y="556.20" width="13.30" height="1.40" fill="#b83a3a" />
<rect x="554.67" y="550.00" width="13.60" height="6.90" fill="#ffd966" />
<rect x="574.14" y="544.43" width="13.60" height="12.47" fill="#ffd966" />
<rect x="593.61" y="544.43" width="13.60" height="12.47" fill="#ffd966" />
<rect x="613.08" y="544.43" width="13.60" height="12.47" fill="#ffd966" />
<rect x="632.55" y="544.43" width="13.60" height="12.47" fill="#ffd966" />
<rect x="652.02" y="544.43" width="13.60" height="12.47" fill="#ffd966" />
<rect x="671.49" y="538.68" width="13.60" height="18.22" fill="#ffd966" />
<rect x="690.96" y="532.16" width="13.60" height="24.74" fill="#ffd966" />
<rect x="710.43" y="532.16" width="13.60" height="24.74" fill="#ffd966" />
<rect x="729.90" y="526.60" width="13.60" height="30.30" fill="#008000" />
<rect x="749.37" y="526.60" width="13.60" height="30.30" fill="#008000" />
<rect x="773.10" y="407.50" width="239.75" height="151.50" fill="#ffffff" />
<rect x="1012.85" y="380.30" width="4.40" height="179.30" fill="#ffffff" />
<rect x="773.10" y="380.30" width="240.35" height="27.20" fill="#bf9000" />
<rect x="773.10" y="380.30" width="240.35" height="0.80" fill="rgba(90,60,0,0.35)" />
<rect x="773.10" y="380.30" width="1.20" height="27.20" fill="rgba(60,40,0,0.35)" />
<rect x="1012.20" y="380.30" width="1.20" height="27.20" fill="rgba(60,40,0,0.45)" />
<rect x="773.10" y="406.90" width="240.35" height="1.20" fill="#5a4a20" />
<rect x="773.10" y="407.50" width="1.25" height="152.10" fill="#4a4a4a" />
<rect x="1012.20" y="407.50" width="1.25" height="152.10" fill="#4a4a4a" />
<rect x="773.10" y="464.75" width="240.35" height="1.30" fill="#555555" />
<rect x="773.10" y="523.55" width="240.35" height="1.30" fill="#4a4a4a" />
<rect x="773.10" y="558.35" width="240.35" height="1.30" fill="#4a4a4a" />
<text x="893.40" y="398.40" font-size="12" fill="#fff2cc" font-weight="bold" text-anchor="middle" >Revenue per Game</text>
<circle cx="802.80" cy="441.50" r="10" fill="#cc0000"/>
<text x="853.60" y="448.10" font-size="32.8" fill="#7f6000" font-weight="bold">629500.0</text>
<text x="904.55" y="478.10" font-size="10.5" fill="#000" font-weight="bold" text-anchor="end" >Target Value:</text>
<text x="935.00" y="478.10" font-size="10.5" fill="#000" font-weight="bold" text-anchor="middle" >642090.0</text>
<text x="904.55" y="495.00" font-size="10.5" fill="#000" font-weight="bold" text-anchor="end" >Change</text>
<text x="935.00" y="495.00" font-size="10.5" fill="#b8282a" font-weight="bold" text-anchor="middle" >-12,590.0</text>
<path d="M890.75 507.40 h11.5 l-5.75 10.5 z" fill="#cc0000"/>
<text x="935.00" y="516.40" font-size="10.5" fill="#b8282a" font-weight="bold" text-anchor="middle" >-2.0%</text>
<rect x="779.50" y="556.20" width="13.30" height="1.40" fill="#b83a3a" />
<rect x="798.67" y="553.83" width="13.60" height="3.07" fill="#ffd966" />
<rect x="818.14" y="550.96" width="13.60" height="5.94" fill="#ffd966" />
<rect x="837.61" y="548.08" width="13.60" height="8.82" fill="#ffd966" />
<rect x="857.08" y="545.97" width="13.60" height="10.93" fill="#ffd966" />
<rect x="876.55" y="543.09" width="13.60" height="13.81" fill="#ffd966" />
<rect x="896.02" y="540.02" width="13.60" height="16.88" fill="#ffd966" />
<rect x="915.49" y="537.34" width="13.60" height="19.56" fill="#ffd966" />
<rect x="934.96" y="535.04" width="13.60" height="21.86" fill="#ffd966" />
<rect x="954.43" y="532.16" width="13.60" height="24.74" fill="#ffd966" />
<rect x="973.90" y="529.28" width="13.60" height="27.62" fill="#ffd966" />
<rect x="993.37" y="526.60" width="13.60" height="30.30" fill="#008000" />
<rect x="1017.10" y="407.50" width="239.75" height="151.50" fill="#ffffff" />
<rect x="1256.85" y="380.30" width="4.40" height="179.30" fill="#ffffff" />
<rect x="1017.10" y="380.30" width="240.35" height="27.20" fill="#bf9000" />
<rect x="1017.10" y="380.30" width="240.35" height="0.80" fill="rgba(90,60,0,0.35)" />
<rect x="1017.10" y="380.30" width="1.20" height="27.20" fill="rgba(60,40,0,0.35)" />
<rect x="1256.20" y="380.30" width="1.20" height="27.20" fill="rgba(60,40,0,0.45)" />
<rect x="1017.10" y="406.90" width="240.35" height="1.20" fill="#5a4a20" />
<rect x="1017.10" y="407.50" width="1.25" height="152.10" fill="#4a4a4a" />
<rect x="1256.20" y="407.50" width="1.25" height="152.10" fill="#4a4a4a" />
<rect x="1017.10" y="464.75" width="240.35" height="1.30" fill="#555555" />
<rect x="1017.10" y="523.55" width="240.35" height="1.30" fill="#4a4a4a" />
<rect x="1017.10" y="558.35" width="240.35" height="1.30" fill="#4a4a4a" />
<text x="1137.40" y="398.40" font-size="12" fill="#fff2cc" font-weight="bold" text-anchor="middle" >Sponsorship Growth Rate</text>
<circle cx="1046.80" cy="441.50" r="10" fill="#cc0000"/>
<text x="1143.20" y="448.10" font-size="32.8" fill="#7f6000" font-weight="bold">9.0</text>
<text x="1148.55" y="478.10" font-size="10.5" fill="#000" font-weight="bold" text-anchor="end" >Target Value:</text>
<text x="1179.00" y="478.10" font-size="10.5" fill="#000" font-weight="bold" text-anchor="middle" >10.3</text>
<text x="1148.55" y="495.00" font-size="10.5" fill="#000" font-weight="bold" text-anchor="end" >Change</text>
<text x="1179.00" y="495.00" font-size="10.5" fill="#b8282a" font-weight="bold" text-anchor="middle" >-1.3</text>
<path d="M1134.75 507.40 h11.5 l-5.75 10.5 z" fill="#cc0000"/>
<text x="1179.00" y="516.40" font-size="10.5" fill="#b8282a" font-weight="bold" text-anchor="middle" >-12.6%</text>
<rect x="1023.50" y="556.20" width="13.30" height="1.40" fill="#b83a3a" />
<rect x="1042.67" y="553.83" width="13.60" height="3.07" fill="#ffd966" />
<rect x="1062.14" y="548.08" width="13.60" height="8.82" fill="#ffd966" />
<rect x="1081.61" y="548.08" width="13.60" height="8.82" fill="#ffd966" />
<rect x="1101.08" y="545.01" width="13.60" height="11.89" fill="#ffd966" />
<rect x="1120.55" y="543.09" width="13.60" height="13.81" fill="#ffd966" />
<rect x="1140.02" y="537.34" width="13.60" height="19.56" fill="#ffd966" />
<rect x="1159.49" y="534.46" width="13.60" height="22.44" fill="#ffd966" />
<rect x="1178.96" y="532.16" width="13.60" height="24.74" fill="#ffd966" />
<rect x="1198.43" y="532.16" width="13.60" height="24.74" fill="#ffd966" />
<rect x="1217.90" y="526.60" width="13.60" height="30.30" fill="#008000" />
<rect x="1237.37" y="526.60" width="13.60" height="30.30" fill="#008000" />
</svg>
</body></html>
